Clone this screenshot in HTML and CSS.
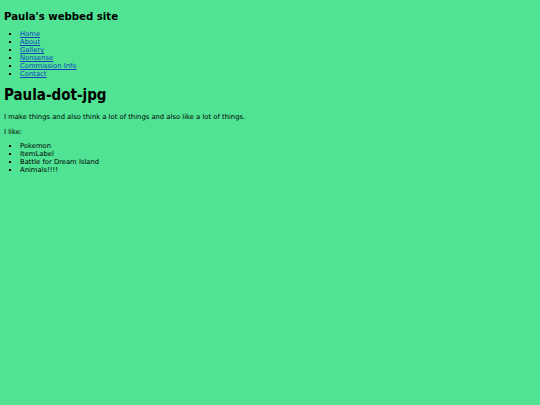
FILE: index.html
```html
<!DOCTYPE html>
<html>
<head>
<meta charset="utf-8">
<link rel="stylesheet" href="styles.css">
</head>
<body>
<h2 class="site-title">Paula's webbed site</h2>
<ul class="nav">
  <li><a href="#">Home</a></li>
  <li><a href="#">About</a></li>
  <li><a href="#">Gallery</a></li>
  <li><a href="#">Nonsense</a></li>
  <li><a href="#">Commission Info</a></li>
  <li><a href="#">Contact</a></li>
</ul>
<h1 class="page-title">Paula-dot-jpg</h1>
<p class="text">I make things and also think a lot of things and also like a lot of things.</p>
<p class="text">I like:</p>
<ul class="likes">
  <li>Pokemon</li>
  <li>ItemLabel</li>
  <li>Battle for Dream Island</li>
  <li>Animals!!!!</li>
</ul>
</body>
</html>
```

FILE: styles.css
```css
html { background: #50e394; }
body {
  margin: 4px;
  font-family: "DejaVu Sans", Verdana, sans-serif;
  font-size: 6.8px;
  line-height: 8px;
  color: #000;
}
.site-title {
  font-family: "DejaVu Sans Condensed", "DejaVu Sans", sans-serif;
  font-size: 11.3px;
  line-height: 15px;
  margin: 5px 0 6px;
}
.nav, .likes {
  list-style: square;
  margin: 0;
  padding-left: 16px;
}
.nav a { color: #1040c0; }
.page-title {
  font-family: "DejaVu Sans Condensed", "DejaVu Sans", sans-serif;
  font-size: 15px;
  line-height: 20px;
  margin: 7px 0 8px;
}
.text { margin: 0 0 7px; }
.likes { margin-top: -1px; }
```
